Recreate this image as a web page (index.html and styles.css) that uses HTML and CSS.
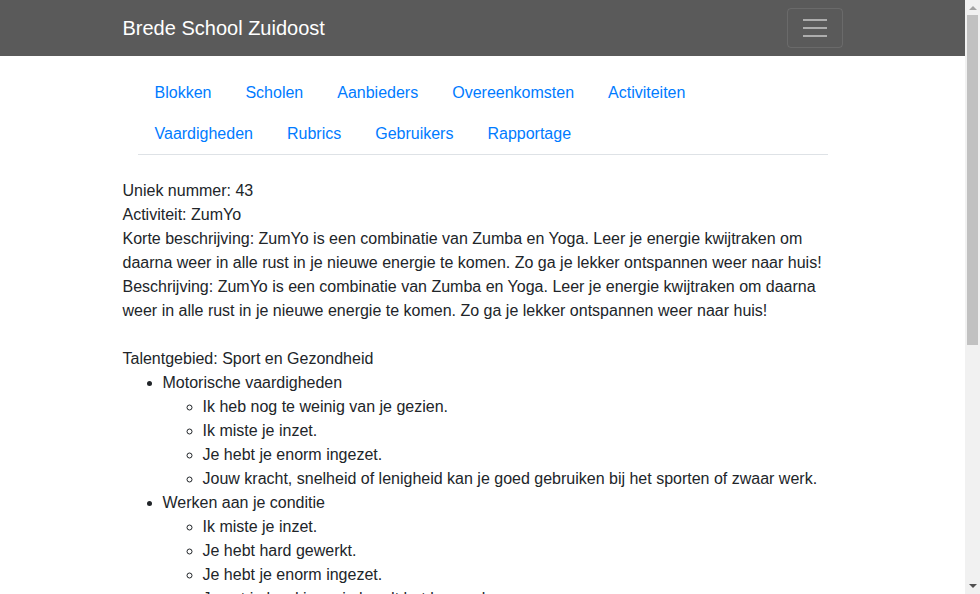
FILE: index.html
```html
<!DOCTYPE html>
<html lang="nl">
<head>
<meta charset="utf-8">
<title>Brede School Zuidoost</title>
<link rel="stylesheet" href="styles.css">
</head>
<body>
<div class="page">
  <header class="navbar">
    <div class="navbar-inner">
      <a class="brand" href="#">Brede School Zuidoost</a>
      <button class="toggler" type="button" aria-label="Menu">
        <span class="toggler-icon"><i></i><i></i><i></i></span>
      </button>
    </div>
  </header>
  <main class="container">
    <ul class="tabs">
      <li><a href="#">Blokken</a></li>
      <li><a href="#">Scholen</a></li>
      <li><a href="#">Aanbieders</a></li>
      <li><a href="#">Overeenkomsten</a></li>
      <li><a href="#">Activiteiten</a></li>
      <li><a href="#">Vaardigheden</a></li>
      <li><a href="#">Rubrics</a></li>
      <li><a href="#">Gebruikers</a></li>
      <li><a href="#">Rapportage</a></li>
    </ul>
    <div class="details">
      <div>Uniek nummer: 43</div>
      <div>Activiteit: ZumYo</div>
      <div>Korte beschrijving: ZumYo is een combinatie van Zumba en Yoga. Leer je energie kwijtraken om daarna weer in alle rust in je nieuwe energie te komen. Zo ga je lekker ontspannen weer naar huis!</div>
      <div>Beschrijving: ZumYo is een combinatie van Zumba en Yoga. Leer je energie kwijtraken om daarna weer in alle rust in je nieuwe energie te komen. Zo ga je lekker ontspannen weer naar huis!</div>
      <div class="spacer"></div>
      <div>Talentgebied: Sport en Gezondheid</div>
      <ul class="skills">
        <li>Motorische vaardigheden
          <ul>
            <li>Ik heb nog te weinig van je gezien.</li>
            <li>Ik miste je inzet.</li>
            <li>Je hebt je enorm ingezet.</li>
            <li>Jouw kracht, snelheid of lenigheid kan je goed gebruiken bij het sporten of zwaar werk.</li>
          </ul>
        </li>
        <li>Werken aan je conditie
          <ul>
            <li>Ik miste je inzet.</li>
            <li>Je hebt hard gewerkt.</li>
            <li>Je hebt je enorm ingezet.</li>
            <li>Je zet je hard in en je houdt het lang vol.</li>
          </ul>
        </li>
      </ul>
    </div>
  </main>
</div>
<div class="scrollbar" aria-hidden="true">
  <span class="sb-up"></span>
  <span class="sb-thumb"></span>
  <span class="sb-down"></span>
</div>
</body>
</html>
```
FILE: styles.css
```css
* { box-sizing: border-box; }

html, body {
  margin: 0;
  padding: 0;
}

body {
  font-family: "Liberation Sans", Arial, sans-serif;
  font-size: 16px;
  line-height: 24px;
  color: #212529;
  background: #fff;
}

.page {
  margin-right: 15px;
}

.navbar {
  background: #5a5a5a;
  padding: 8px 0;
}

.navbar-inner {
  width: 720px;
  margin: 0 auto;
  display: flex;
  align-items: center;
  justify-content: space-between;
}

.brand {
  color: #fff;
  text-decoration: none;
  font-size: 20px;
  line-height: 30px;
  padding: 5px 0;
}

.toggler {
  width: 56px;
  height: 40px;
  background: transparent;
  border: 1px solid rgba(255, 255, 255, 0.1);
  border-radius: 4px;
  padding: 0;
  display: flex;
  align-items: center;
  justify-content: center;
}

.toggler-icon {
  display: flex;
  flex-direction: column;
  gap: 6px;
  width: 24px;
}

.toggler-icon i {
  display: block;
  height: 2px;
  background: rgba(255, 255, 255, 0.5);
}

.container {
  width: 720px;
  margin: 0 auto;
  padding-bottom: 30px;
}

.tabs {
  list-style: none;
  margin: 16px 15px 0;
  padding: 0;
  display: flex;
  flex-wrap: wrap;
  border-bottom: 1px solid #dee2e6;
}

.tabs li {
  display: block;
}

.tabs a {
  display: block;
  padding: 9px 17px 8px;
  color: #007bff;
  text-decoration: none;
  line-height: 24px;
}

.details {
  margin-top: 24px;
}

.spacer {
  height: 24px;
}

.skills {
  margin: 0 0 16px;
  padding-left: 40px;
}

.skills ul {
  margin: 0;
  padding-left: 40px;
  list-style-type: circle;
}

/* drawn window scrollbar, overlaying the right edge */
.scrollbar {
  position: fixed;
  top: 0;
  right: 0;
  width: 15px;
  height: 100vh;
  background: #f1f1f1;
}

.sb-up,
.sb-down {
  position: absolute;
  left: 4px;
  width: 0;
  height: 0;
  border-left: 4px solid transparent;
  border-right: 4px solid transparent;
}

.sb-up {
  top: 6px;
  border-bottom: 4px solid #a3a3a3;
}

.sb-down {
  bottom: 6px;
  border-top: 4px solid #505050;
}

.sb-thumb {
  position: absolute;
  top: 15px;
  left: 2px;
  width: 11px;
  height: 330px;
  background: #c1c1c1;
}
```
